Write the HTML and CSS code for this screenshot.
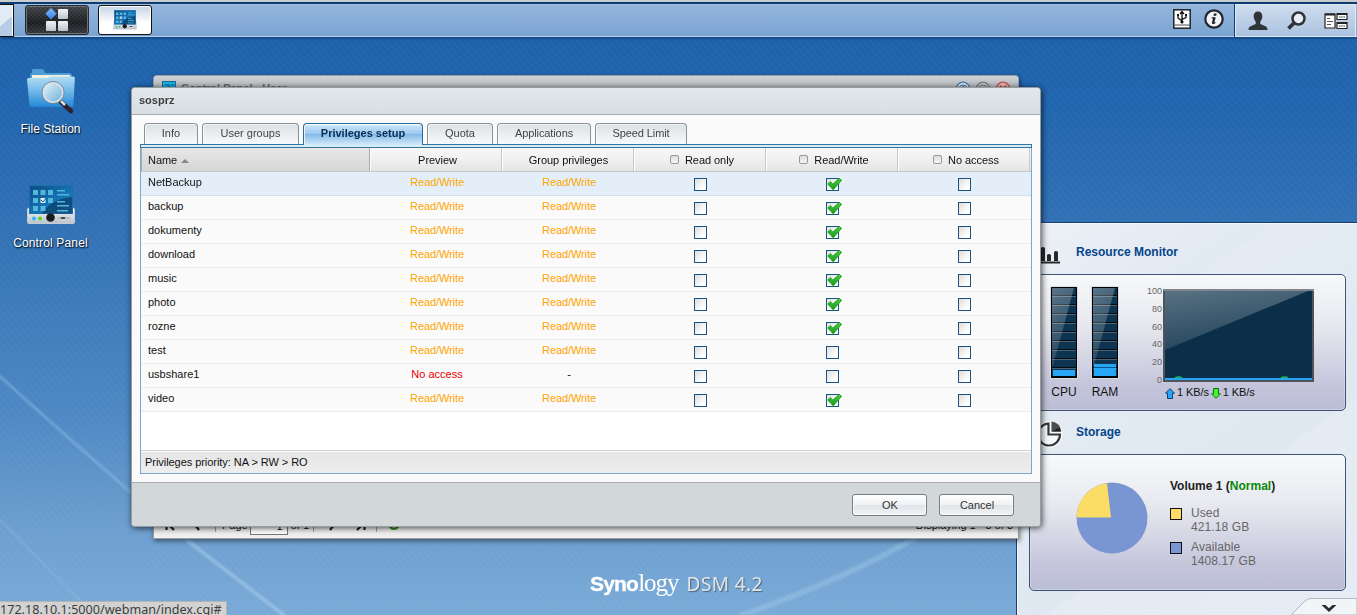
FILE: index.html
```
<!DOCTYPE html>
<html lang="en">
<head>
<meta charset="utf-8">
<title>Synology DSM 4.2</title>
<link rel="stylesheet" href="styles.css">
</head>
<body>
<svg width="0" height="0" class="defs">
  <defs>
    <linearGradient id="tick" x1="0" y1="0" x2="0" y2="1"><stop offset="0" stop-color="#4fd043"/><stop offset="1" stop-color="#149a17"/></linearGradient>
    <linearGradient id="folder" x1="0" y1="0" x2="0" y2="1"><stop offset="0" stop-color="#b3def5"/><stop offset=".55" stop-color="#67b2e6"/><stop offset="1" stop-color="#2387d6"/></linearGradient>
    <linearGradient id="lens" x1="0" y1="0" x2="1" y2="1"><stop offset="0" stop-color="#e9f5fc"/><stop offset="1" stop-color="#6badd9"/></linearGradient>
    <linearGradient id="screen" x1="0" y1="0" x2="1" y2="1"><stop offset="0" stop-color="#0d4c80"/><stop offset=".5" stop-color="#1470b0"/><stop offset="1" stop-color="#1a86c9"/></linearGradient>
    <linearGradient id="metal" x1="0" y1="0" x2="0" y2="1"><stop offset="0" stop-color="#f2f4f6"/><stop offset="1" stop-color="#b9c3cd"/></linearGradient>
    <linearGradient id="blue" x1="0" y1="0" x2="0" y2="1"><stop offset="0" stop-color="#82baff"/><stop offset="1" stop-color="#3483ee"/></linearGradient>
    <linearGradient id="glass" x1="0" y1="0" x2=".35" y2="1"><stop offset="0" stop-color="#fff" stop-opacity=".32"/><stop offset="1" stop-color="#fff" stop-opacity=".1"/></linearGradient>
    <symbol id="check" viewBox="0 0 15 13"><path d="M.8 6 3.200 3.600 5.900 6.200 12 .4 14.600 2.200 6.200 11.800Z" fill="url(#tick)" stroke="#17a01b" stroke-width="1"/></symbol>
    <symbol id="panel" viewBox="0 0 48 40">
      <rect x=".5" y="23" width="47" height="15.500" rx="1.500" fill="url(#metal)" stroke="#c6ccd2"/>
      <rect x="2.500" y=".5" width="43" height="28" fill="url(#screen)" stroke="#1c70b2"/>
      <path d="M15 28.500Q24 14 45 12V28.500Z" fill="#071f3d" opacity=".5"/>
      <g fill="#55b6dc"><path d="M6 5h5v5H6zM13.500 5h5v5h-5zM21 5h5v5h-5zM6 13h5v5H6zM21 13h5v5h-5zM6 21h5v5H6zM13.500 21h5v5h-5z"/><path d="M30 5h8v1.500h-8zM30 9h12v1.500H30zM30 16h8v1.500h-8zM30 20h12v1.500H30zM30 25h11v1.500H30z"/></g>
      <path d="M13.500 13h5v5h-5z" fill="#dff3fa"/><path d="m14 15 2 2 3-4" fill="none" stroke="#176083"/>
      <circle cx="7" cy="33.500" r="2" fill="#35b3f0"/><circle cx="13" cy="33.500" r="2" fill="#64cf22"/><circle cx="23.500" cy="32.500" r="4.300" fill="#1b1c1e"/>
      <path d="M31 33h12" stroke="#9b9b9b"/><path d="M34 33h4" stroke="#222" stroke-width="1.500"/>
    </symbol>
  </defs>
</svg>

<svg class="wallpaper" viewBox="0 0 1357 615" preserveAspectRatio="none">
  <defs><filter id="soft"><feGaussianBlur stdDeviation="1.300"/></filter></defs>
  <g fill="none" filter="url(#soft)">
    <path d="M-5 372Q90 458 190 543" stroke="#9fc9ec" stroke-width="2.500" opacity=".45"/>
    <path d="M188 541 285 616" stroke="#b3d5ef" stroke-width="3.500" opacity=".5"/>
    <path d="M-5 515 95 616" stroke="#9fc9ec" stroke-width="2" opacity=".3"/>
    <path d="M740 616Q850 577 920 535" stroke="#aed2ef" stroke-width="6" opacity=".35"/>
  </g>
</svg>

<header class="taskbar">
  <div class="edge-button"></div>
  <div class="menu-button"><svg width="24" height="24" viewBox="0 0 24 24"><path d="m6 0 5.600 5.800L6 11.600.4 5.800Z" fill="url(#blue)"/><g fill="url(#metal)"><rect x="13" y="1" width="10" height="10" rx="1"/><rect x="1" y="13" width="10" height="10" rx="1"/><rect x="13" y="13" width="10" height="10" rx="1"/></g></svg></div>
  <div class="task-button"><svg width="24" height="20"><use href="#panel"/></svg></div>
  <div class="tray">
    <svg width="18" height="20" viewBox="0 0 18 20"><rect x=".8" y=".8" width="16.400" height="18.400" fill="#fff" stroke="#202428" stroke-width="1.500"/><path d="M1 16h16" stroke="#555"/><path d="M9 14V3M7 5l2-2.500L11 5M9 12 5 9V6M9 10.500l4-2V6" fill="none" stroke="#111" stroke-width="1.300"/><path d="M4 5h2v2H4zM12 5h2v2h-2z" fill="#111"/><circle cx="9" cy="13" r="1.500"/></svg>
    <svg width="20" height="20" viewBox="0 0 20 20"><circle cx="10" cy="10" r="8.700" fill="#f0f4f8" stroke="#22262a" stroke-width="2.200"/><path d="M10 4.500h2.700l-.5 2.300H9.500zM7.700 8.200h4l-1.400 5.300 1.400-.2-.3 1c-1.600.9-3.700 1-3.400-.6l1-4.300-1.500-.2z" fill="#181b1e"/></svg>
  </div>
  <div class="session">
    <svg width="20" height="20" viewBox="0 0 20 20" fill="#303337"><path d="M10 .5c3 0 4.500 2 4.300 5-.1 2.600-1.200 4-2 5V13l5 2.300c1.500.7 2.200 1.500 2.200 3.700H.5c0-2.200.7-3 2.200-3.700l5-2.300v-2.500c-.8-1-1.900-2.400-2-5C5.500 2.500 7 .5 10 .5Z"/></svg>
    <svg width="20" height="20" viewBox="0 0 20 20" fill="none" stroke="#303337"><circle cx="12.500" cy="7.500" r="6" stroke-width="2.500" fill="#e8eef5"/><path d="m8 12-5.500 5.500" stroke-width="3.800"/></svg>
    <svg width="24" height="18" viewBox="0 0 24 18"><g fill="#fff" stroke="#222" stroke-width="1.200"><path d="M1 2h10v14H1zM13 1.500h10v6H13zM13 10.500h10v6H13z"/></g><path d="M1 2.500h10M13 2h10M13 11h10" stroke="#222" stroke-width="2"/><path d="M3 6.500h3M3 9.500h6M3 12.500h4" stroke="#555"/><path d="M15 5h6M15 14h6" stroke="#333" stroke-dasharray="1.500 .7"/></svg>
  </div>
</header>

<div class="shortcuts">
  <div class="shortcut"><svg width="50" height="48" viewBox="0 0 50 48"><path d="M6 5V2.500Q6 1 7.500 1H16q1.500 0 2 1.500L19 5h24q3 0 3 3v20H4V8q0-3 2-3Z" fill="#4e9dd4"/><path d="M6 7h38v10H6z" fill="#f3f1e2"/><path d="M2.500 10h19l3-1.500h23q1.500 0 1.300 1.500L47.500 37q-.2 2-2 2h-40Q3.800 39 3.500 37L1 11.500Q1 10 2.500 10Z" fill="url(#folder)"/><path d="m35 34 10 9" stroke="#2b2130" stroke-width="4.500" stroke-linecap="round"/><path d="m35 33 4 4" stroke="#dbe1e6" stroke-width="2.500"/><circle cx="27" cy="24.500" r="10" fill="url(#lens)" stroke="#dce3e8" stroke-width="2"/><circle cx="27" cy="24.500" r="11" fill="none" stroke="#667888" stroke-width=".8"/></svg><span>File Station</span></div>
  <div class="shortcut"><svg width="48" height="40"><use href="#panel"/></svg><span class="wide">Control Panel</span></div>
</div>

<div class="brand"><b>Syno</b><span class="logy">logy</span><span class="dsm">DSM 4.2</span></div>

<aside class="widgets">
  <section class="widget">
    <h2><svg width="24" height="18" viewBox="0 0 24 18"><path d="M0 3q1.500-2 3 0v11H0zM3 1q2-2 4 0v13H3zM9 8q2-2 4 0v6H9zM16 5q2-2 4 0v9h-4zM0 14.500h22v2H0z" fill="#29292c"/></svg>Resource Monitor</h2>
    <div class="card monitor">
      <div class="gauge"><div class="meter"><i class="cpu-fill"></i><svg width="23" height="89" viewBox="0 0 23 89" preserveAspectRatio="none"><path d="M0 0H22L1 78H0Z" fill="url(#glass)"/></svg></div>CPU</div>
      <div class="gauge"><div class="meter"><i class="ram-fill"></i><svg width="23" height="89" viewBox="0 0 23 89" preserveAspectRatio="none"><path d="M0 0H22L1 78H0Z" fill="url(#glass)"/></svg></div>RAM</div>
      <div class="axis"><span>100</span><span>80</span><span>60</span><span>40</span><span>20</span><span>0</span></div>
      <div class="network">
        <svg class="chart" width="151" height="93" viewBox="0 0 151 93"><rect x="1" y="1" width="149" height="91" fill="#0b2f49" stroke="#505459" stroke-width="2"/><path d="M0 1H151" stroke="#80868b" stroke-width="2"/><path d="M2 2H145L2 61Z" fill="url(#glass)"/><path d="M2 90H149" stroke="#25a4f5" stroke-width="2"/><path d="M12 89q4-2 7 0M118 89q4-2 7 0" fill="none" stroke="#19bd65" stroke-width="1.500"/></svg>
        <div class="rates"><svg width="10" height="11" viewBox="0 0 10 11"><path d="m5 .7 4.500 4.500H7.500V10.500h-5V5.200H.5Z" fill="#26a4f5" stroke="#123f74"/></svg><span>1 KB/s</span><svg width="10" height="11" viewBox="0 0 10 11"><path d="m5 10.300 4.500-4.500H7.500V.5h-5V5.800H.5Z" fill="#3cf52f" stroke="#176b17"/></svg><span>1 KB/s</span></div>
      </div>
    </div>
  </section>
  <section class="widget">
    <h2><svg width="26" height="28" viewBox="0 0 26 28"><path d="M11.500 3.500A11 11 0 1 0 23 14.500H11.500Z" fill="#f6f8fa" stroke="#fff" stroke-width="4.500"/><path d="M11.500 3.500A11 11 0 1 0 23 14.500H11.500Z" fill="#f6f8fa" stroke="#36383b" stroke-width="2.200"/><path d="M14.500 1.500Q23 2.500 24 11.500H14.500Z" fill="#4b4d50"/><path d="m14.500 11.500 8-4 1.500 4Z" fill="#222"/></svg>Storage</h2>
    <div class="card storage">
      <svg class="pie" width="72" height="72" viewBox="0 0 72 72"><circle cx="36" cy="36" r="35.500" fill="#7995d2"/><path d="M35 35.500H.5A35.500 35.500 0 0 1 31 .9Z" fill="#fbdc66"/></svg>
      <div class="volume"><h3>Volume 1 (<em>Normal</em>)</h3>
        <div class="legend"><i class="used"></i><span>Used<br>421.18 GB</span></div>
        <div class="legend"><i class="available"></i><span>Available<br>1408.17 GB</span></div>
      </div>
    </div>
  </section>
  <svg class="drawer" width="66" height="17" viewBox="0 0 66 17"><path d="M0 17 14 3Q17 .5 20 .5H66V17Z" fill="#f2f5f7" stroke="#b4b9bf"/><path d="M30.500 7h4l3.500 3.200L41.500 7h4L38 14Z" fill="#292c30"/></svg>
</aside>

<section class="window control-window">
  <div class="window-title"><svg width="14" height="12" viewBox="0 0 14 12"><rect x=".5" y=".5" width="13" height="12" fill="#15b6e9" stroke="#1f6798"/><path d="M3 4h3M3 7h3M7 3v6M9 4h3M9 7h3" stroke="#07618f"/></svg><b>Control Panel - User</b>
    <div class="controls"><svg width="16" height="16" viewBox="0 0 16 16"><circle cx="8" cy="8" r="6.800" fill="#d6e2ed" stroke="#477cad" stroke-width="1.300"/><circle cx="8" cy="8" r="4" fill="none" stroke="#477cad"/><path d="M6.500 6.500Q8 4 9.500 6.500L8 9" fill="none" stroke="#477cad"/></svg><svg width="16" height="16" viewBox="0 0 16 16"><circle cx="8" cy="8" r="6.800" fill="#bbc0c3" stroke="#777d82" stroke-width="1.300"/><circle cx="8" cy="8" r="4" fill="none" stroke="#777d82"/></svg><svg width="16" height="16" viewBox="0 0 16 16"><circle cx="8" cy="8" r="6.800" fill="#e5b5b5" stroke="#c35050" stroke-width="1.300"/><path d="m5 5 6 6m0-6-6 6" stroke="#c34040" stroke-width="2"/></svg></div>
  </div>
  <div class="pager">
    <svg width="10" height="12" viewBox="0 0 10 12"><path d="M1.500 1v10M9 1 4 6l5 5" fill="none" stroke="#222" stroke-width="2.200"/></svg>
    <svg class="prev" width="8" height="12" viewBox="0 0 8 12"><path d="M6 1 2 6l4 5" fill="none" stroke="#222" stroke-width="2.200"/></svg>
    <i></i><span>Page</span><span class="page-input">1</span><span>of 1</span><i class="after"></i>
    <svg width="8" height="12" viewBox="0 0 8 12"><path d="m2 1 4 5-4 5" fill="none" stroke="#222" stroke-width="2.200"/></svg>
    <svg class="last" width="10" height="12" viewBox="0 0 10 12"><path d="m1 1 5 5-5 5M8.500 1v10" fill="none" stroke="#222" stroke-width="2.200"/></svg>
    <i class="end"></i><svg width="12" height="12" viewBox="0 0 12 12"><path d="M2 4a4.300 4.300 0 1 0 8 0" fill="none" stroke="#338a0e" stroke-width="2.400"/></svg><span class="displaying">Displaying 1 - 3 of 3</span></div>
</section>

<section class="window dialog">
  <div class="dialog-title">sosprz</div>
  <div class="dialog-body">
    <nav class="tabs"><div class="tab info">Info</div><div class="tab groups">User groups</div><div class="tab active">Privileges setup</div><div class="tab quota">Quota</div><div class="tab apps">Applications</div><div class="tab speed">Speed Limit</div></nav>
    <div class="tab-line"></div>
    <div class="grid">
      <div class="row head"><div class="name">Name<i class="sort"></i></div><div>Preview</div><div class="group-head">Group privileges</div><div class="choice"><i class="mini"></i>Read only</div><div class="choice"><i class="mini"></i>Read/Write</div><div class="choice"><i class="mini"></i>No access</div></div>
      <div class="row selected"><div class="name">NetBackup</div><div class="rw">Read/Write</div><div class="rw">Read/Write</div><div><i class="box"></i></div><div><i class="box"><svg><use href="#check"/></svg></i></div><div><i class="box"></i></div></div>
      <div class="row"><div class="name">backup</div><div class="rw">Read/Write</div><div class="rw">Read/Write</div><div><i class="box"></i></div><div><i class="box"><svg><use href="#check"/></svg></i></div><div><i class="box"></i></div></div>
      <div class="row"><div class="name">dokumenty</div><div class="rw">Read/Write</div><div class="rw">Read/Write</div><div><i class="box"></i></div><div><i class="box"><svg><use href="#check"/></svg></i></div><div><i class="box"></i></div></div>
      <div class="row"><div class="name">download</div><div class="rw">Read/Write</div><div class="rw">Read/Write</div><div><i class="box"></i></div><div><i class="box"><svg><use href="#check"/></svg></i></div><div><i class="box"></i></div></div>
      <div class="row"><div class="name">music</div><div class="rw">Read/Write</div><div class="rw">Read/Write</div><div><i class="box"></i></div><div><i class="box"><svg><use href="#check"/></svg></i></div><div><i class="box"></i></div></div>
      <div class="row"><div class="name">photo</div><div class="rw">Read/Write</div><div class="rw">Read/Write</div><div><i class="box"></i></div><div><i class="box"><svg><use href="#check"/></svg></i></div><div><i class="box"></i></div></div>
      <div class="row"><div class="name">rozne</div><div class="rw">Read/Write</div><div class="rw">Read/Write</div><div><i class="box"></i></div><div><i class="box"><svg><use href="#check"/></svg></i></div><div><i class="box"></i></div></div>
      <div class="row"><div class="name">test</div><div class="rw">Read/Write</div><div class="rw">Read/Write</div><div><i class="box"></i></div><div><i class="box"></i></div><div><i class="box"></i></div></div>
      <div class="row"><div class="name">usbshare1</div><div class="na">No access</div><div class="none">-</div><div><i class="box"></i></div><div><i class="box"></i></div><div><i class="box"></i></div></div>
      <div class="row"><div class="name">video</div><div class="rw">Read/Write</div><div class="rw">Read/Write</div><div><i class="box"></i></div><div><i class="box"><svg><use href="#check"/></svg></i></div><div><i class="box"></i></div></div>
      <div class="priority">Privileges priority: NA &gt; RW &gt; RO</div>
    </div>
  </div>
  <footer class="buttons"><button>OK</button><button>Cancel</button></footer>
</section>

<div class="status-url">172.18.10.1:5000/webman/index.cgi#</div>
</body>
</html>
```
FILE: styles.css
```
* { box-sizing: border-box; }
body {
  position: relative;
  width: 1357px;
  height: 615px;
  margin: 0;
  overflow: hidden;
  font: 11px/14px "Liberation Sans", Arial, sans-serif;
  color: #111;
  background: repeating-linear-gradient(50deg, rgba(255,255,255,.025) 0 2px, transparent 2px 5px), linear-gradient(180deg, #1d60a9 0, #2065af 16%, #3574b6 41%, #4e89c4 68%, #6a9dce 84%, #7aaad7 100%);
}
svg { display: block; flex: none; }
.defs { position: absolute; }
.wallpaper { position: absolute; inset: 0; width: 100%; height: 100%; }

.taskbar {
  position: relative;
  display: flex;
  height: 37px;
  padding-top: 4px;
  border-top: 2px solid #c9ccce;
  border-bottom: 1px solid #b8d0e9;
  background: linear-gradient(#0b3c72 0 2px, #9fc0e2 2px 3px, #94b5dc 3px, #7ba4d3);
  box-shadow: 0 1px 3px #0b386c;
}
.edge-button { width: 14px; height: 33px; margin-top: -2px; border: 1px solid #111; border-left: 0; background: linear-gradient(140deg, #e2ebf5 50%, #b7cde5 52%); box-shadow: inset -1px 0 #fff; }
.menu-button, .task-button { display: flex; align-items: center; justify-content: center; border-radius: 3px; }
.menu-button { width: 64px; height: 30px; margin: -1px 0 0 11px; border: 1px solid #252b32; background: repeating-conic-gradient(rgba(0,0,0,.23) 0 25%, transparent 0 50%) 0 0/4px 4px, linear-gradient(#4d5155, #24272a 60%, #424549); box-shadow: inset 0 0 0 1px #6c7075; }
.task-button { width: 54px; height: 30px; margin: -1px 0 0 9px; border: 1px solid #111; background: linear-gradient(#c5d4e7, #fff 60%); box-shadow: inset 0 0 0 1px #fff; }
.tray { display: flex; gap: 13px; margin: 3px 10px 0 auto; }
.session { display: flex; align-items: center; gap: 18px; width: 122px; height: 33px; margin: -2px 1px 0 0; padding-left: 13px; border-left: 1px solid #153e6b; background: linear-gradient(#d0deee, #a9c1df); box-shadow: inset 1px 1px #dce9f7, inset -1px -1px #e0ebf6; }

.shortcuts { position: absolute; top: 68px; left: 0; display: flex; flex-direction: column; width: 101px; }
.shortcut { display: flex; flex-direction: column; align-items: center; justify-content: space-between; height: 68px; margin-bottom: 49px; font-size: 12px; line-height: 14px; color: #fff; text-shadow: 1px 1px 1px #082344, 0 1px 2px #123; }
.shortcut + .shortcut { height: 65px; }
.wide { letter-spacing: .15px; }

.brand { position: absolute; top: 569px; left: 590px; display: flex; align-items: baseline; color: #fff; line-height: 27px; }
.brand b { font-size: 21px; letter-spacing: -.800px; -webkit-text-stroke: .3px #fff; }
.logy { font: 25px/27px "Liberation Serif", serif; letter-spacing: -1px; }
.dsm { margin-left: 8px; font: 19px/25px "Noto Sans", sans-serif; color: #e4e7ea; text-shadow: 1px 1px 1px #4b647c; letter-spacing: .4px; }

.widgets { position: absolute; left: 1016px; top: 222px; width: 341px; height: 393px; padding: 0 11px 0 13px; overflow: hidden; border: solid #183e6f; border-width: 1px 0 0 1px; background: linear-gradient(145deg, #edf1f6, #e1e9f3 28%, #e4ebf3 29%, #dfe8f1 65%, #e4ebf3 66%, #e5ecf5); box-shadow: inset 1px 1px #f4f8fc; }
.widget h2 { display: flex; align-items: center; gap: 14px; height: 51px; margin: 0; padding: 6px 0 0 8px; font-size: 12px; line-height: 14px; color: #04458a; }
.widget h2 svg { margin-top: 9px; }
.widget + .widget h2 { height: 43px; padding: 0 0 1px 7px; gap: 13px; }
.widget + .widget h2 svg { margin-top: 3px; }
.card { width: 317px; height: 137px; margin-left: -1px; border: 1px solid #3d5475; border-radius: 5px; background: linear-gradient(#f7f8fa, #e9eaf0 35%, #c4c5db 82%, #bcbed6); box-shadow: inset 0 0 0 1px rgba(255,255,255,.25); }
.monitor { display: flex; padding: 12px 0 0 21px; }
.gauge { display: flex; flex-direction: column; align-items: center; gap: 7px; width: 26px; margin-right: 15px; font-size: 12px; }
.meter { position: relative; width: 26px; height: 91px; flex: none; border: 1px solid #000; outline: 1px solid #d9dee4; background: repeating-linear-gradient(#0d3451 0 7px, #02090f 7px 8px, #496477 8px 9px); }
.meter svg { position: absolute; left: 0; top: 0; }
.meter i { position: absolute; left: 1px; right: 1px; bottom: 1px; height: 6px; background: #28a5f5; }
.meter .ram-fill { height: 12px; background: linear-gradient(#28a5f5 0 3px, #0a5691 3px 4px, #28a5f5 4px); }
.axis { display: flex; flex-direction: column; justify-content: space-between; width: 29px; height: 99px; margin: -1px 0 0; text-align: right; font-size: 9px; line-height: 10px; color: #656565; }
.network { display: flex; flex-direction: column; margin-left: 1px; padding-top: 2px; }
.rates { display: flex; align-items: center; gap: 2px; padding: 2px 0 0 2px; font-size: 11px; line-height: 14px; letter-spacing: -.1px; }
.rates svg { margin-top: 4px; }
.storage { display: flex; padding: 27px 0 0 46px; }
.volume { margin: -3px 0 0 22px; font-size: 12px; }
.volume h3 { margin: 0 0 13px; font-size: 12px; line-height: 14px; color: #222; }
.volume em { font-style: normal; color: #078a0b; }
.legend { display: flex; gap: 9px; height: 34px; line-height: 14px; letter-spacing: .1px; color: #666; }
.legend i { width: 12px; height: 12px; margin-top: 2px; border: 1px solid #111; }
.used { background: #fbdc66; }
.available { background: #7995d2; }
.drawer { position: absolute; right: 0; bottom: 0; }

.window { position: absolute; display: flex; flex-direction: column; }
.control-window { left: 153px; top: 75px; width: 866px; height: 464px; justify-content: space-between; border: 1px solid #9b9fa3; border-radius: 4px 4px 0 0; background: #ececed; box-shadow: 1px 2px 5px rgba(0,0,0,.5); }
.window-title { display: flex; height: 22px; padding: 5px 7px 0 8px; border-radius: 3px 3px 0 0; background: linear-gradient(#ced2d6, #b5b9bc 12px); color: #666; font-size: 11px; }
.window-title b { margin: 0 0 0 5px; }
.controls { display: flex; gap: 4px; margin-left: auto; }
.pager { display: flex; align-items: center; height: 27px; padding: 0 5px 0 11px; background: linear-gradient(#e1e1e2, #f1f1f1); }
.pager i { width: 1px; height: 14px; margin: 0 6px 0 14px; background: #999; }
.pager .prev { margin-left: 18px; }
.pager .after { margin: 0 14px 0 4px; }
.pager .last { margin-left: 20px; }
.pager .end { margin: 0 11px 0 10px; }
.pager .page-input { width: 38px; height: 20px; margin: 0 3px 0 2px; padding: 3px 4px 0; text-align: right; border: 1px solid #777; background: #fff; }
.pager .displaying { margin-left: auto; }

.dialog { left: 131px; top: 87px; width: 910px; height: 440px; border: 1px solid #979ca1; border-radius: 4px; background: #fafafa; box-shadow: 1px 1px 6px rgba(0,0,0,.7); }
.dialog-title { height: 27px; padding: 5px 7px; border-bottom: 1px solid #a8acaf; border-radius: 3px 3px 0 0; background: linear-gradient(#e2e7eb, #d9dee2); font-weight: bold; color: #3c3c3c; }
.dialog-body { flex: 1; padding: 8px 8px 0; }
.tabs { display: flex; gap: 4px; height: 21px; margin-left: 4px; }
.tab { height: 21px; border: 1px solid #8a9299; border-bottom: 0; border-radius: 4px 4px 0 0; background: linear-gradient(#dce1e4, #f8f9fa); text-align: center; line-height: 19px; color: #444; box-shadow: inset 1px 1px rgba(255,255,255,.7); }
.info { width: 54px; }
.groups { width: 97px; }
.active { position: relative; width: 120px; height: 22px; border-color: #2b6d9b; background: linear-gradient(#fff 0, #c4e0f7 10%, #9bc8ef 48%, #82bbea 50%, #d4e9f8); font-weight: bold; color: #0b2c53; }
.quota { width: 66px; }
.apps { width: 94px; letter-spacing: -.1px; }
.speed { width: 92px; letter-spacing: -.1px; }
.tab-line { width: 892px; height: 4px; border: 1px solid #35749c; background: #d5ecf9; }
.grid { display: flex; flex-direction: column; width: 892px; height: 326px; border: 1px solid #79a9cc; border-top: 0; background: #fff; }
.row { display: grid; grid-template-columns: 229px repeat(5, 132px); height: 24px; border-bottom: 1px solid #ececec; background: #fafafa; text-align: center; }
.row > div { padding-top: 3px; }
.row .name { padding-left: 7px; text-align: left; }
.row .rw, .row .na, .row .none { padding-left: 2px; }
.row .rw { letter-spacing: -.1px; color: #ffa500; }
.row .na { color: #e00; }
.head { background: linear-gradient(#f8f8f8, #f0f0f0 50%, #e4e4e4); border-bottom-color: #c8c8c8; }
.head > div { display: flex; align-items: center; justify-content: center; padding: 0 0 0 4px; border-right: 1px solid #cacaca; box-shadow: inset 1px 0 #fff; letter-spacing: -.05px; }
.head .group-head { padding-left: 2px; }
.head .choice { padding-left: 5px; }
.head .name { justify-content: flex-start; padding-left: 6px; border-left: 1px solid #aaa; border-right-color: #aaa; background: linear-gradient(#e7e7e7, #d5d5d5); box-shadow: none; }
.sort { margin: 2px 0 0 4px; border: solid transparent; border-width: 0 4px 4px; border-bottom-color: #888; }
.mini { width: 9px; height: 9px; margin-right: 6px; border: 1px solid #999; border-radius: 2px; background: linear-gradient(#ddd, #f7f7f7); }
.selected { background: #e4eef9; border-bottom-color: #d5dfeb; }
.box { display: block; width: 13px; height: 13px; margin: 3px auto 0; border: 1px solid #1b5484; background: linear-gradient(135deg, #dcdcd8, #fff 75%); }
.box svg { width: 15px; height: 13px; margin: -1px 0 0; overflow: visible; }
.priority { height: 23px; margin-top: auto; padding: 4px; border-top: 1px solid #ccc; background: linear-gradient(#fff 0 1px, #e5e5e5 1px, #eee); letter-spacing: -.05px; }
.buttons { display: flex; justify-content: flex-end; gap: 12px; height: 44px; padding: 11px 26px 0 0; border-top: 1px solid #a8acaf; border-radius: 0 0 3px 3px; background: #d2d7da; }
.buttons button { width: 75px; height: 22px; padding: 0 0 0 1px; border: 1px solid #777d82; border-radius: 3px; background: linear-gradient(#fff, #eff1f3 48%, #dfe4e8 50%, #f1f4f6); font: 11px/14px "Liberation Sans", sans-serif; color: #333; box-shadow: inset 0 0 0 1px rgba(255,255,255,.6); }

.status-url { position: absolute; left: 0; top: 601px; width: 227px; height: 14px; border: 1px solid #b4b4b4; border-width: 1px 1px 0 0; background: #d2d2d2; font: 12.600px/15px "Noto Sans", sans-serif; color: #3d3d3d; white-space: nowrap; }
```
